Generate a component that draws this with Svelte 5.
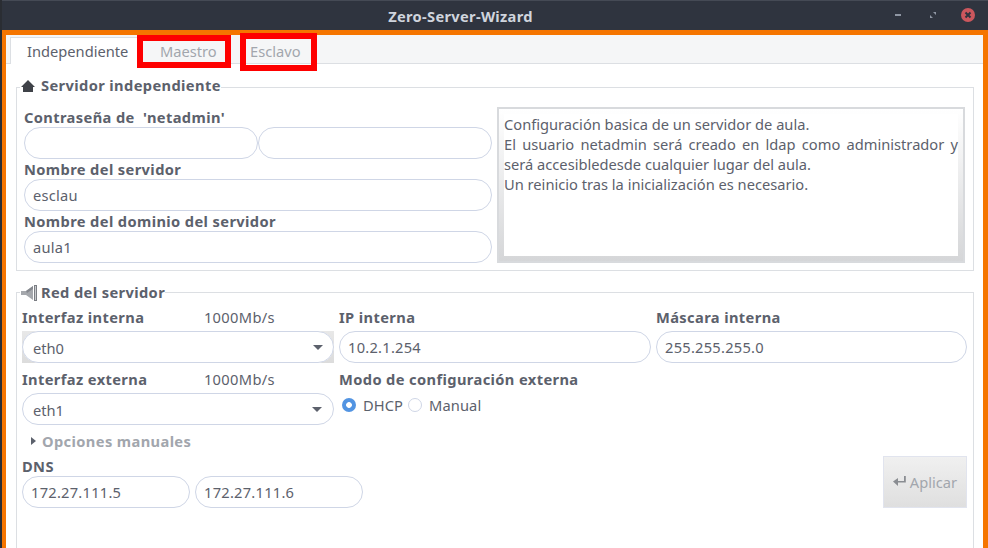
<script>
	let tabs = ['Independiente', 'Maestro', 'Esclavo'];
</script>

<div class="window">
	<header class="titlebar">
		<span class="title">Zero-Server-Wizard</span>
		<div class="controls">
			<svg class="minimize" width="6" height="2" viewBox="0 0 6 2"><rect width="6" height="2" fill="#8f96a3" /></svg>
			<svg width="6" height="6" viewBox="0 0 6 6"><path d="M3 0h3v3zM0 3l3 3H0z" fill="#8f96a3" /></svg>
			<svg width="14" height="14" viewBox="0 0 14 14">
				<circle cx="7" cy="7" r="7" fill="#cc575d" />
				<path d="M4.500 4.500l5 5M9.500 4.500l-5 5" stroke="#2f343f" stroke-width="2" />
			</svg>
		</div>
	</header>

	<div class="content">
		<div class="tabbar">
			{#each tabs as tab, i}
				<div class="tab" class:active={i === 0}>{tab}</div>
			{/each}
			<span class="mark mark-maestro"></span>
			<span class="mark mark-esclavo"></span>
		</div>

		<div class="page">
			<fieldset class="frame first">
				<legend>
					<svg width="14" height="12" viewBox="0 0 14 12">
						<path d="M7 0L14 7H12V12H2V7H0z" fill="#3f4248" />
					</svg>
					Servidor independiente
				</legend>
				<div class="split">
					<div class="fields">
						<span class="label">Contraseña de &nbsp;'netadmin'</span>
						<div class="pair">
							<input type="password" />
							<input type="password" />
						</div>
						<span class="label">Nombre del servidor</span>
						<input value="esclau" />
						<span class="label">Nombre del dominio del servidor</span>
						<input value="aula1" />
					</div>
					<div class="info">
						<p>Configuración basica de un servidor de aula.</p>
						<p class="just">El usuario netadmin será creado en ldap como administrador y será accesibledesde cualquier lugar del aula.</p>
						<p>Un reinicio tras la inicialización es necesario.</p>
					</div>
				</div>
			</fieldset>

			<fieldset class="frame second">
				<legend>
					<svg width="16" height="16" viewBox="0 0 16 16">
						<path d="M0 6H5L12 1V15L5 10H0z" fill="#a5a8ad" />
						<path d="M5 6L12 1V4L6 8z" fill="#85888e" />
						<path d="M13 0h3V16h-3z" fill="#7b7e84" />
						<path d="M14 1h1V15h-1z" fill="#c9cbce" />
					</svg>
					Red del servidor
				</legend>
				<div class="net">
					<div class="col">
						<div class="label-row"><span class="label">Interfaz interna</span><span class="speed">1000Mb/s</span></div>
						<div class="combo shaded"><span>eth0</span><i class="caret"></i></div>
					</div>
					<div class="col">
						<span class="label">IP interna</span>
						<input value="10.2.1.254" />
					</div>
					<div class="col">
						<span class="label">Máscara interna</span>
						<input value="255.255.255.0" />
					</div>
					<div class="col">
						<div class="label-row"><span class="label">Interfaz externa</span><span class="speed">1000Mb/s</span></div>
						<div class="combo"><span>eth1</span><i class="caret"></i></div>
					</div>
					<div class="col mode">
						<span class="label">Modo de configuración externa</span>
						<div class="radios">
							<span class="radio on"></span><span class="radio-text">DHCP</span>
							<span class="radio"></span><span class="radio-text">Manual</span>
						</div>
					</div>
				</div>

				<div class="expander"><i class="arrow"></i><span>Opciones manuales</span></div>

				<div class="bottom">
					<div class="dns">
						<span class="label">DNS</span>
						<div class="dns-pair">
							<input value="172.27.111.5" />
							<input value="172.27.111.6" />
						</div>
					</div>
					<button disabled>
						<svg width="13" height="11" viewBox="0 0 13 11">
							<path d="M11 0h1.800V6.500H5V10L0 5.500 5 2V5h6z" fill="#8a8d92" />
						</svg>
						Aplicar
					</button>
				</div>
			</fieldset>
		</div>
	</div>
</div>

<style>
	:global(body) {
		margin: 0;
		overflow: hidden;
		background: #2a2d33;
	}

	.window {
		width: 988px;
		height: 548px;
		display: flex;
		flex-direction: column;
		font-family: 'Noto Sans', sans-serif;
		font-size: 14.67px;
		color: #5c616c;
		overflow: hidden;
	}

	.titlebar {
		height: 30px;
		flex: none;
		margin-left: 2px;
		padding-top: 1px;
		background: #2f343f;
		display: flex;
		align-items: center;
		justify-content: center;
		position: relative;
		box-sizing: border-box;
		border-top: 1px solid #454a55;
	}

	.title {
		color: #cfd4dd;
		font-weight: 700;
		font-size: 14.67px;
		letter-spacing: 0.3px;
		margin-left: -69px;
	}

	.controls {
		position: absolute;
		right: 13px;
		top: 7px;
		display: flex;
		align-items: center;
		gap: 25px;
	}

	.minimize {
		margin-right: 4px;
	}

	.content {
		flex: 1;
		margin-left: 2px;
		border: solid #f57500;
		border-width: 5px 5px 0 4px;
		display: flex;
		flex-direction: column;
		min-height: 0;
		background: #fff;
	}

	.tabbar {
		height: 29px;
		flex: none;
		box-sizing: border-box;
		background: #f5f6f7;
		border-bottom: 1px solid #dcdfe3;
		padding: 2px 0 0 4px;
		display: flex;
		position: relative;
	}

	.tab {
		height: 27px;
		box-sizing: border-box;
		line-height: 28px;
		color: #a2a6ad;
		padding: 0 0 0 23px;
	}

	.tab:nth-child(2) {
		width: 90px;
	}

	.tab.active {
		width: 127px;
		color: #5c616c;
		background: #fff;
		border: solid #dcdfe3;
		border-width: 1px 0 0 1px;
		line-height: 26px;
		padding: 0 0 0 16px;
	}

	.mark {
		position: absolute;
		box-sizing: border-box;
		border: 6px solid #fe0000;
		pointer-events: none;
	}

	.mark-maestro {
		left: 131px;
		top: 0;
		width: 94px;
		height: 33px;
	}

	.mark-esclavo {
		left: 234px;
		top: -2px;
		width: 77px;
		height: 38px;
	}

	.page {
		flex: 1;
		padding: 12px 9px 0 10px;
		display: flex;
		flex-direction: column;
		gap: 12px;
		min-height: 0;
	}

	.frame {
		margin: 0;
		border: 1px solid #dcdfe3;
		padding: 0;
		min-width: 0;
	}

	.frame legend {
		margin-left: 3px;
		padding: 0 0 0 1px;
		font-weight: 700;
		letter-spacing: 0.38px;
		line-height: 19px;
		display: flex;
		align-items: center;
		gap: 6px;
	}

	.first {
		height: 195px;
		flex: none;
		box-sizing: border-box;
	}

	.first legend {
		padding-bottom: 4px;
	}

	.second {
		flex: 1;
		box-sizing: border-box;
		padding: 0 6px 0 5px;
		border-bottom: 0;
	}

	.second legend {
		margin-left: -2px;
		gap: 4px;
	}

	.split {
		display: flex;
		padding: 8px 7px 0;
		gap: 5px;
	}

	.fields {
		width: 468px;
		display: flex;
		flex-direction: column;
	}

	.label {
		display: block;
		font-weight: 700;
		letter-spacing: 0.38px;
		line-height: 20px;
		white-space: nowrap;
	}

	.pair {
		display: flex;
	}

	.pair input {
		flex: 1;
		min-width: 0;
	}

	input {
		box-sizing: border-box;
		display: block;
		width: 100%;
		height: 32px;
		border: 1px solid #cfd6e6;
		border-radius: 16px;
		background: #fff;
		padding: 0 8px;
		font: inherit;
		letter-spacing: 0.25px;
		color: #5c616c;
		outline: none;
	}

	.info {
		width: 468px;
		height: 156px;
		box-sizing: border-box;
		border: 2px solid #d8dadd;
		padding: 5px;
		background:
			linear-gradient(#fff, #fff) content-box,
			linear-gradient(#fff, #d5d6d8);
		line-height: 20px;
	}

	.info p {
		margin: 0;
		background: #fff;
	}

	.info .just {
		text-align: justify;
	}

	.net {
		display: grid;
		grid-template-columns: 312px 312px 311px;
		column-gap: 5px;
		row-gap: 6px;
		margin-top: 5px;
	}

	.col {
		display: flex;
		flex-direction: column;
		gap: 4px;
	}

	.label-row {
		display: flex;
		justify-content: space-between;
		padding-right: 59px;
		line-height: 20px;
	}

	.speed {
		letter-spacing: 0.35px;
	}

	.combo {
		box-sizing: border-box;
		height: 32px;
		border: 1px solid #cfd6e6;
		border-radius: 16px;
		background: #fff;
		padding: 1px 11px 0 10px;
		display: flex;
		align-items: center;
		justify-content: space-between;
	}

	/* eth0 has the square grey backing showing behind its rounded corners */
	.shaded {
		position: relative;
		padding-left: 11px;
		border: 0;
		border-radius: 0;
		background:
			radial-gradient(circle at 16px 50%, #fff 15.500px, transparent 16px) left / 16px 100% no-repeat,
			radial-gradient(circle at 0 50%, #fff 15.500px, transparent 16px) right / 16px 100% no-repeat,
			linear-gradient(#fff, #fff) center / calc(100% - 32px) 100% no-repeat,
			linear-gradient(#e8e8e8, #dcdcdc);
	}

	.shaded::after {
		content: '';
		position: absolute;
		inset: 0;
		border: 1px solid #cfd6e6;
		border-radius: 16px;
	}

	.caret {
		width: 0;
		height: 0;
		border: solid transparent;
		border-width: 5px 5px 0;
		border-top-color: #5c616c;
	}

	.radios {
		display: flex;
		align-items: center;
		height: 26px;
		margin-top: -1px;
		padding-left: 3px;
		gap: 7px;
	}

	.radio {
		box-sizing: border-box;
		width: 14px;
		height: 14px;
		border-radius: 50%;
		border: 1px solid #cfd6e6;
		background: #fff;
	}

	.radio.on {
		border: 0;
		background: radial-gradient(circle, #fff 2.500px, #5294e2 3.200px);
	}

	.radio-text {
		letter-spacing: 0.1px;
		margin-right: -2px;
	}

	.expander {
		display: flex;
		align-items: center;
		height: 20px;
		margin-top: 5.500px;
		padding-left: 9px;
		gap: 6px;
		font-weight: 700;
		letter-spacing: 0.38px;
		color: #a2a6ad;
	}

	.arrow {
		width: 0;
		height: 0;
		border: solid transparent;
		border-width: 4px 0 4px 5px;
		border-left-color: #5c616c;
	}

	.bottom {
		display: flex;
		justify-content: space-between;
		align-items: flex-end;
		margin-top: 5px;
	}

	.dns .label {
		line-height: 19px;
	}

	.dns-pair {
		display: flex;
		gap: 5px;
	}

	.dns-pair input {
		width: 168px;
	}

	button {
		width: 84px;
		height: 52px;
		box-sizing: border-box;
		border: 1px solid #e1e4ee;
		background: linear-gradient(#f0f0f0, #dfdfdf);
		font: inherit;
		color: #a2a6ad;
		padding: 0;
		display: flex;
		align-items: center;
		justify-content: center;
		gap: 4px;
	}
</style>
